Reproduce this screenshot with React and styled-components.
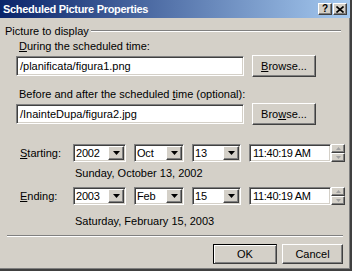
import React from "react";
import styled, { createGlobalStyle, css } from "styled-components";

const GlobalStyle = createGlobalStyle`
  html, body {
    margin: 0;
    padding: 0;
    background: #d4d0c8;
  }
  body {
    font-family: "Liberation Sans", Arial, sans-serif;
    font-size: 11px;
    color: #000;
  }
`;

const sunken = css`
  box-sizing: border-box;
  background: #fff;
  border: 1px solid;
  border-color: #808080 #ffffff #ffffff #808080;
  box-shadow: inset 1px 1px 0 #404040, inset -1px -1px 0 #d4d0c8;
`;

const raised = css`
  box-sizing: border-box;
  background: #d4d0c8;
  border: 1px solid;
  border-color: #ffffff #404040 #404040 #ffffff;
  box-shadow: inset -1px -1px 0 #808080, inset 1px 1px 0 #d4d0c8;
`;

const Window = styled.div`
  width: 352px;
  height: 271px;
  box-sizing: border-box;
  background: #d4d0c8;
  border-right: 2px solid #404040;
  border-bottom: 2px solid #404040;
  box-shadow: inset -1px -1px 0 #808080;
  display: flex;
  flex-direction: column;
  overflow: hidden;
`;

const TitleBar = styled.div`
  height: 18px;
  flex: none;
  display: flex;
  align-items: center;
  background: linear-gradient(to right, #0a246a, #a6caf0);
  padding: 0 3px;
`;

const Title = styled.div`
  flex: 1;
  color: #fff;
  font-weight: bold;
  font-size: 11px;
  letter-spacing: -0.3px;
`;

const CaptionButton = styled.div`
  ${raised};
  width: 14px;
  height: 12px;
  margin-left: ${(p) => (p.$gap ? "1px" : "0")};
  display: flex;
  align-items: center;
  justify-content: center;
  font-weight: bold;
  font-size: 10px;
  line-height: 1;
`;

const GroupHeader = styled.div`
  display: flex;
  align-items: center;
  height: 13px;
  margin: 6px 9px 0 5px;
`;

const GroupLine = styled.div`
  flex: 1;
  margin-left: 2px;
  border-top: 1px solid #808080;
  border-bottom: 1px solid #ffffff;
`;

const Section = styled.div`
  padding-left: 16px;
`;

const FieldLabel = styled.div`
  height: 13px;
  line-height: 13px;
  padding-left: 3px;
  margin-top: ${(p) => p.$top}px;
`;

const InputRow = styled.div`
  display: flex;
  align-items: center;
  height: 22px;
  margin-top: 2px;
`;

const TextBox = styled.div`
  ${sunken};
  width: 228px;
  height: 20px;
  padding: 0 3px;
  line-height: 18px;
  white-space: nowrap;
`;

const Button = styled.div`
  ${raised};
  width: ${(p) => p.$w}px;
  height: ${(p) => p.$h}px;
  margin-left: ${(p) => p.$ml || 0}px;
  display: flex;
  align-items: center;
  justify-content: center;
  ${(p) =>
    p.$default &&
    css`
      border-color: #000 #404040 #404040 #000;
      box-shadow: inset 1px 1px 0 #ffffff, inset -1px -1px 0 #808080;
    `}
`;

const DateRow = styled.div`
  display: flex;
  align-items: center;
  gap: 8px;
  height: 18px;
  margin-top: ${(p) => p.$top}px;
`;

const RowLabel = styled.div`
  width: 45px;
  padding-left: 20px;
`;

const Combo = styled.div`
  ${sunken};
  width: ${(p) => p.$w}px;
  height: 18px;
  display: flex;
  padding: 1px;
`;

const ComboText = styled.div`
  flex: 1;
  padding-left: 1px;
  line-height: 14px;
  letter-spacing: -0.2px;
`;

const DropButton = styled.div`
  ${raised};
  width: 16px;
  height: 14px;
  display: flex;
  align-items: center;
  justify-content: center;
`;

const TimeGroup = styled.div`
  display: flex;
  align-items: center;
`;

const TimeBox = styled.div`
  ${sunken};
  width: 82px;
  height: 18px;
  padding-left: 3px;
  line-height: 16px;
  letter-spacing: -0.3px;
  white-space: nowrap;
`;

const Spinner = styled.div`
  width: 14px;
  height: 18px;
  display: flex;
  flex-direction: column;
`;

const SpinButton = styled.div`
  ${raised};
  flex: 1;
  display: flex;
  align-items: center;
  justify-content: center;
`;

const DateText = styled.div`
  height: 13px;
  line-height: 13px;
  padding-left: 75px;
  margin-top: ${(p) => p.$top}px;
`;

const Separator = styled.div`
  margin: 7px 7px 0 7px;
  border-top: 1px solid #808080;
  border-bottom: 1px solid #ffffff;
`;

const ButtonRow = styled.div`
  display: flex;
  justify-content: flex-end;
  gap: 5px;
  padding-right: 7px;
  margin-top: 7px;
`;

const U = styled.span`
  text-decoration: underline;
`;

const DownArrow = () => (
  <svg width="7" height="4" viewBox="0 0 7 4">
    <path d="M0 0h7L3.5 4z" fill="#000" />
  </svg>
);

const TinyArrow = ({ up }) => (
  <svg width="5" height="3" viewBox="0 0 5 3">
    <path d={up ? "M0 3h5L2.5 0z" : "M0 0h5L2.5 3z"} fill="#a0a0a0" />
  </svg>
);

const CloseGlyph = () => (
  <svg width="8" height="7" viewBox="0 0 8 7">
    <path d="M0.5 0.5l7 6M7.5 0.5l-7 6" stroke="#000" strokeWidth="1.6" />
  </svg>
);

const DropCombo = ({ value, w }) => (
  <Combo $w={w}>
    <ComboText>{value}</ComboText>
    <DropButton>
      <DownArrow />
    </DropButton>
  </Combo>
);

const TimePicker = ({ value }) => (
  <TimeGroup>
    <TimeBox>{value}</TimeBox>
    <Spinner>
      <SpinButton>
        <TinyArrow up />
      </SpinButton>
      <SpinButton>
        <TinyArrow />
      </SpinButton>
    </Spinner>
  </TimeGroup>
);

export default function App() {
  return (
    <>
      <GlobalStyle />
      <Window>
        <TitleBar>
          <Title>Scheduled Picture Properties</Title>
          <CaptionButton>?</CaptionButton>
          <CaptionButton $gap>
            <CloseGlyph />
          </CaptionButton>
        </TitleBar>

        <GroupHeader>
          Picture to display
          <GroupLine />
        </GroupHeader>

        <Section>
          <FieldLabel $top={3}>
            <U>D</U>uring the scheduled time:
          </FieldLabel>
          <InputRow>
            <TextBox>/planificata/figura1.png</TextBox>
            <Button $w={64} $h={22} $ml={8}>
              <span>
                <U>B</U>rowse...
              </span>
            </Button>
          </InputRow>

          <FieldLabel $top={11}>
            Before and after the scheduled <U>t</U>ime (optional):
          </FieldLabel>
          <InputRow>
            <TextBox>/InainteDupa/figura2.jpg</TextBox>
            <Button $w={64} $h={22} $ml={8}>
              <span>
                Bro<U>w</U>se...
              </span>
            </Button>
          </InputRow>
        </Section>

        <DateRow $top={19}>
          <RowLabel>
            <U>S</U>tarting:
          </RowLabel>
          <DropCombo value="2002" w={53} />
          <DropCombo value="Oct" w={50} />
          <DropCombo value="13" w={49} />
          <TimePicker value="11:40:19 AM" />
        </DateRow>
        <DateText $top={5}>Sunday, October 13, 2002</DateText>

        <DateRow $top={7}>
          <RowLabel>
            <U>E</U>nding:
          </RowLabel>
          <DropCombo value="2003" w={53} />
          <DropCombo value="Feb" w={50} />
          <DropCombo value="15" w={49} />
          <TimePicker value="11:40:19 AM" />
        </DateRow>
        <DateText $top={10}>Saturday, February 15, 2003</DateText>

        <Separator />

        <ButtonRow>
          <Button $w={64} $h={20} $default>
            OK
          </Button>
          <Button $w={61} $h={20}>
            Cancel
          </Button>
        </ButtonRow>
      </Window>
    </>
  );
}
